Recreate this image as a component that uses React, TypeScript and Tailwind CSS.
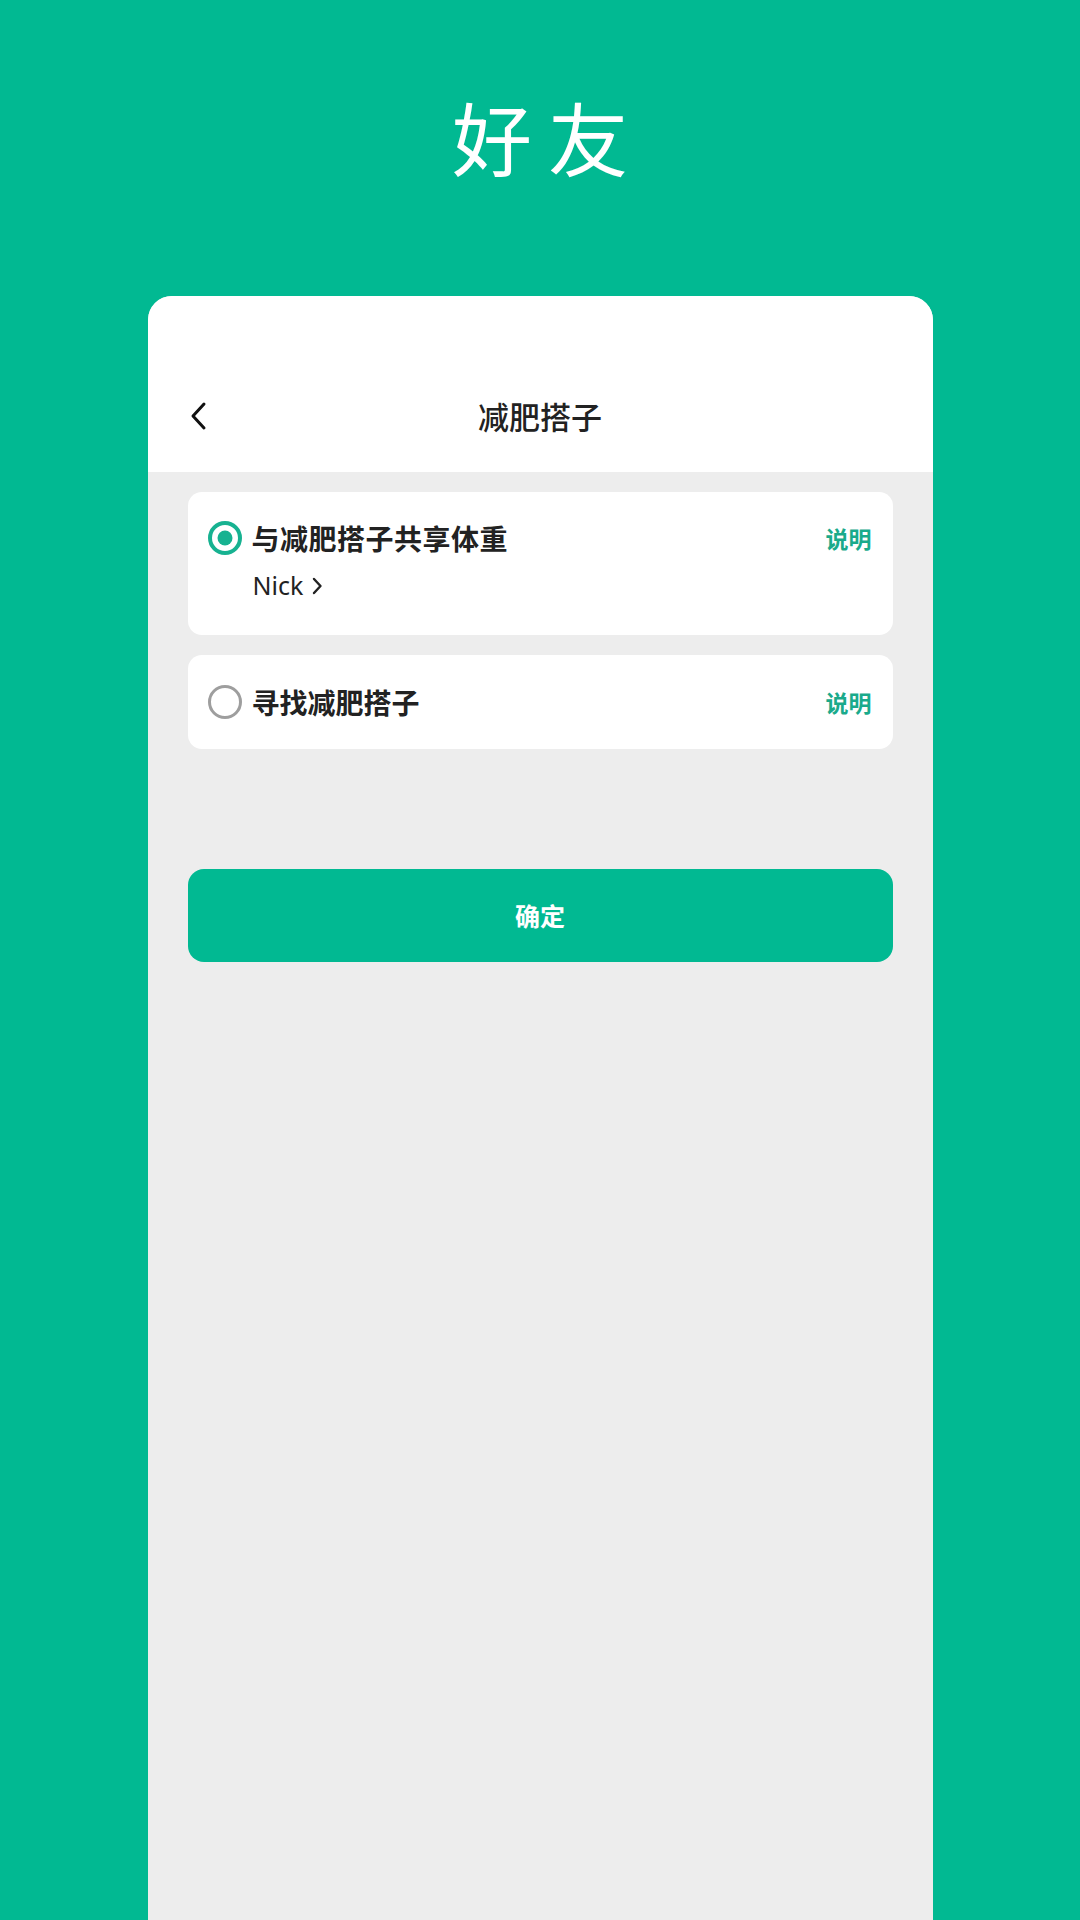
import React from "react"

const cjk = { fontFamily: '"Noto Sans CJK SC", "Noto Sans", sans-serif' }

function Radio({ checked }: { checked: boolean }) {
  return checked ? (
    <svg width="34" height="34" viewBox="0 0 34 34" className="shrink-0">
      <circle cx="17" cy="17" r="15" fill="none" stroke="#17b291" strokeWidth="4" />
      <circle cx="17" cy="17" r="7.5" fill="#17b291" />
    </svg>
  ) : (
    <svg width="34" height="34" viewBox="0 0 34 34" className="shrink-0">
      <circle cx="17" cy="17" r="15.5" fill="none" stroke="#9e9e9e" strokeWidth="3" />
    </svg>
  )
}

export default function App() {
  return (
    <div className="min-h-[1920px] w-[1080px] bg-[#01b992] flex flex-col" style={cjk}>
      <div className="pt-[95px] h-[296px] flex justify-center">
        <h1 className="text-[80px] leading-[80px] font-normal text-white tracking-[16px] pl-[16px]">好友</h1>
      </div>

      <div className="mx-auto w-[785px] flex-1 flex flex-col bg-[#ededed] rounded-t-[24px] overflow-hidden">
        <div className="h-[176px] bg-white flex flex-col justify-end">
          <div className="relative h-[112px] flex items-center justify-center">
            <button className="absolute left-[40px] top-1/2 -translate-y-1/2">
              <svg width="20" height="30" viewBox="0 0 20 30">
                <path d="M16 3 L5 15 L16 27" fill="none" stroke="#111" strokeWidth="3" strokeLinecap="round" strokeLinejoin="round" />
              </svg>
            </button>
            <span className="text-[31px] font-medium text-[#222]">减肥搭子</span>
          </div>
        </div>

        <div className="px-[40px] pt-[20px] flex flex-col">
          <div className="bg-white rounded-[14px] pl-[20px] pr-[21px] pt-[29px] h-[143px]">
            <div className="h-[34px] flex items-center">
              <Radio checked />
              <span className="ml-[10px] text-[28px] font-bold text-[#222] tracking-[0.5px]">与减肥搭子共享体重</span>
              <span className="ml-auto text-[23px] font-bold text-[#1aaa8b]">说明</span>
            </div>
            <div className="mt-[15px] h-[32px] pl-[45px] flex items-center gap-[8px] text-[#222]">
              <span className="text-[25px]" style={{ fontFamily: '"Noto Sans", sans-serif' }}>Nick</span>
              <svg width="12" height="18" viewBox="0 0 12 18">
                <path d="M3 2 L9.5 9 L3 16" fill="none" stroke="#222" strokeWidth="2.4" strokeLinecap="round" strokeLinejoin="round" />
              </svg>
            </div>
          </div>

          <div className="mt-[20px] bg-white rounded-[14px] pl-[20px] pr-[21px] h-[94px] flex items-center">
            <Radio checked={false} />
            <span className="ml-[10px] text-[28px] font-bold text-[#222]">寻找减肥搭子</span>
            <span className="ml-auto text-[23px] font-bold text-[#1aaa8b]">说明</span>
          </div>

          <button className="mt-[120px] h-[93px] rounded-[16px] bg-[#01b992] text-white text-[25px] font-bold">
            确定
          </button>
        </div>
      </div>
    </div>
  )
}
